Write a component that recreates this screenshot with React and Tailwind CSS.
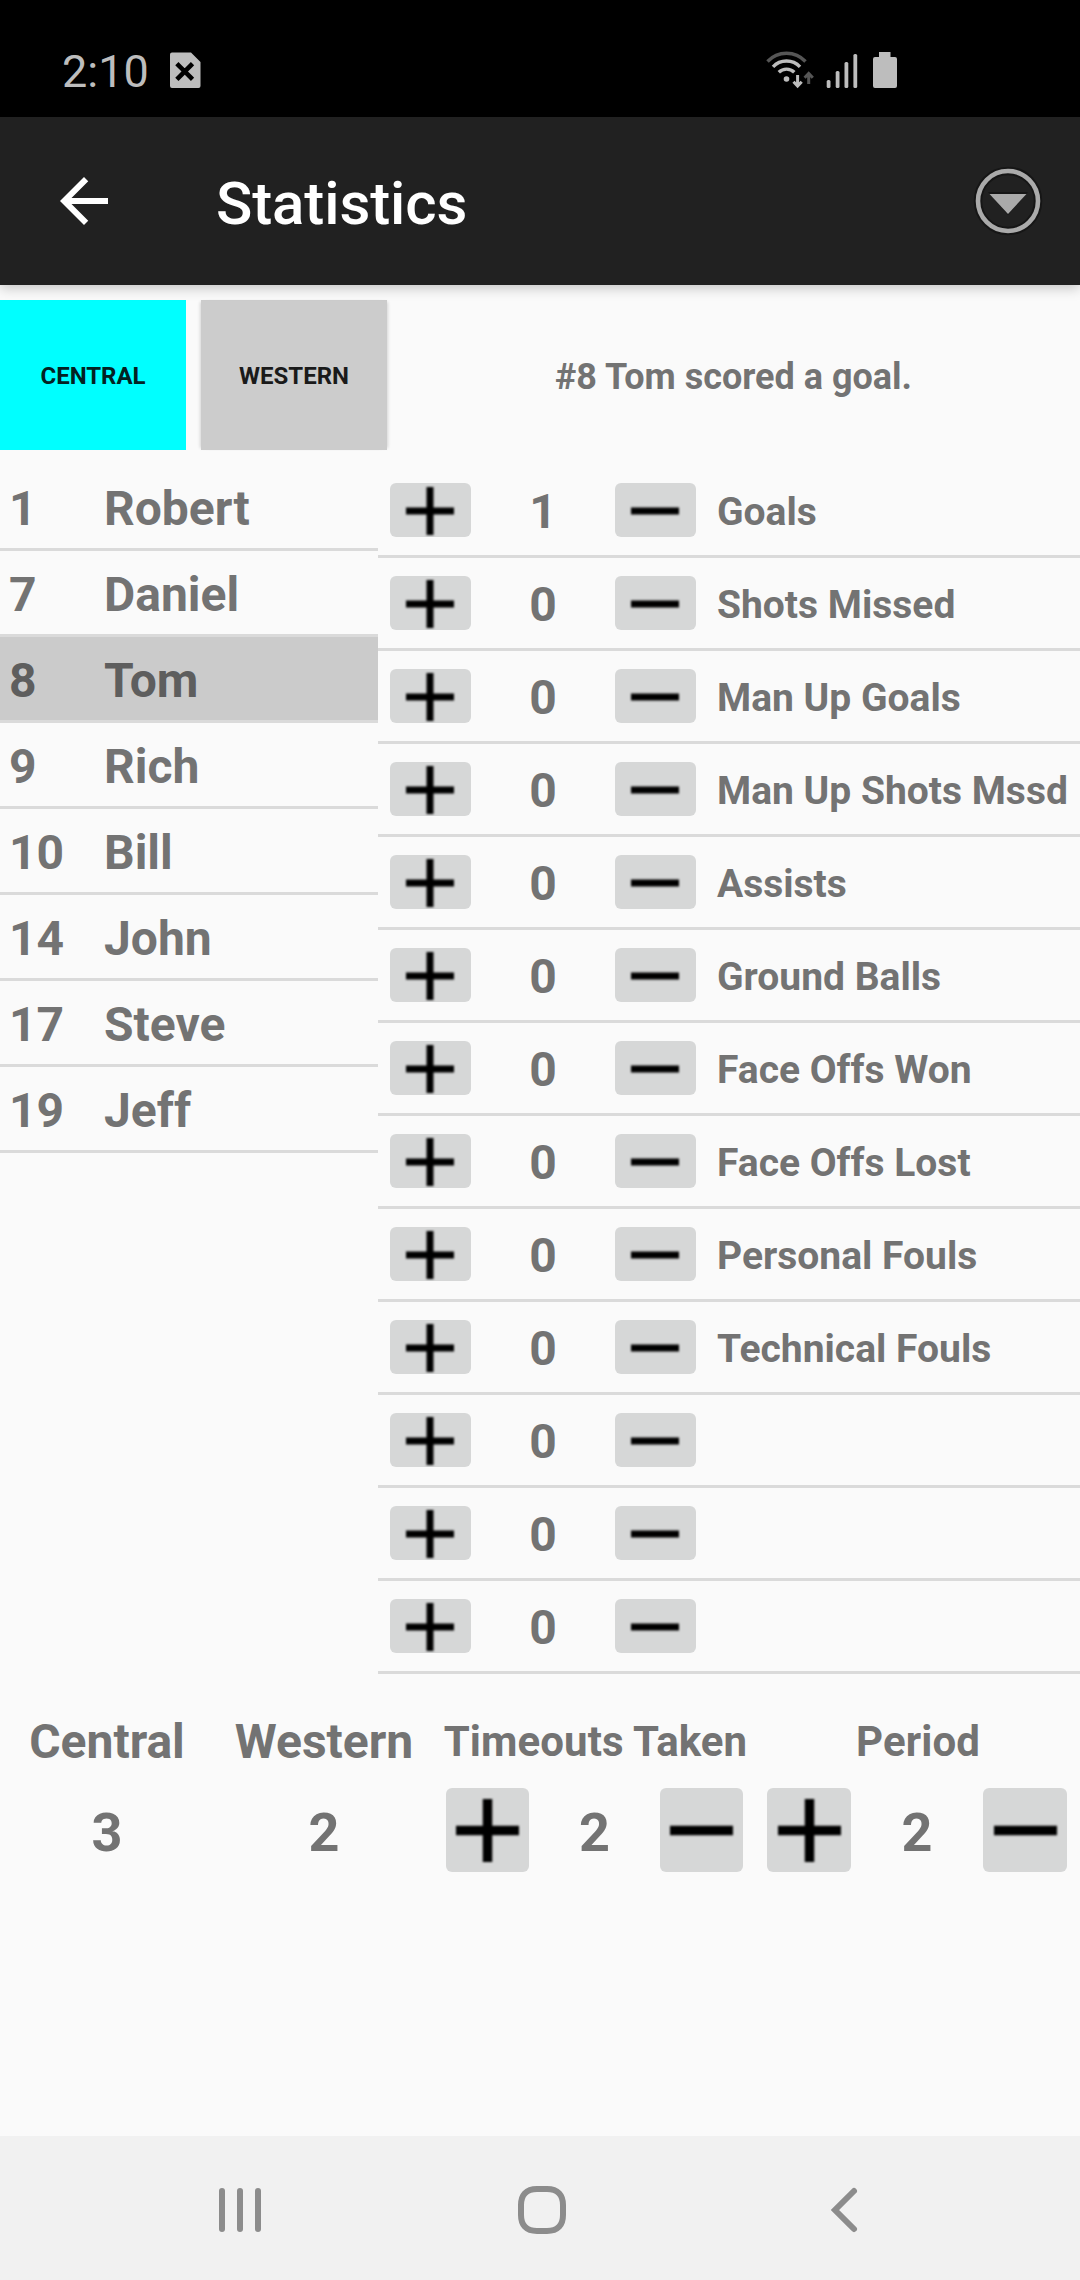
import React from "react";

const players = [
  ["1", "Robert"],
  ["7", "Daniel"],
  ["8", "Tom"],
  ["9", "Rich"],
  ["10", "Bill"],
  ["14", "John"],
  ["17", "Steve"],
  ["19", "Jeff"],
];

const stats = [
  ["1", "Goals"],
  ["0", "Shots Missed"],
  ["0", "Man Up Goals"],
  ["0", "Man Up Shots Mssd"],
  ["0", "Assists"],
  ["0", "Ground Balls"],
  ["0", "Face Offs Won"],
  ["0", "Face Offs Lost"],
  ["0", "Personal Fouls"],
  ["0", "Technical Fouls"],
  ["0", ""],
  ["0", ""],
  ["0", ""],
];

function StatusBar() {
  return (
    <div className="flex h-[117px] items-start bg-black pl-[62px]">
      <span className="mt-[45px] w-[108px] text-[45px] leading-[53px] text-[#bdbdbd]">2:10</span>
      <svg className="mt-[52px]" width="31" height="37" viewBox="0 0 31 37">
        <path d="M2 .5H21L30.5 10V34a2 2 0 0 1-2 2H2a2 2 0 0 1-2-2V2.500a2 2 0 0 1 2-2Z" fill="#bdbdbd" />
        <path d="M8.500 13.300l12.400 12.400M20.900 13.300l-12.400 12.400" stroke="#000" strokeWidth="4.600" strokeLinecap="square" />
      </svg>
      <svg className="ml-[565px] mt-[50px]" width="134" height="40" viewBox="0 0 134 40" fill="none">
        <g strokeWidth="3.400">
          <path d="M1.500 11.500a26 26 0 0 1 38 0" stroke="#565656" />
          <path d="M7 16.800a18.500 18.500 0 0 1 27 0" stroke="#bdbdbd" />
          <path d="M12.800 22.300a11 11 0 0 1 15.500 0" stroke="#bdbdbd" />
        </g>
        <circle cx="20.500" cy="29" r="2.800" fill="#bdbdbd" />
        <path d="M31.600 25v11M27.500 31.800l4.100 4.200 4.100-4.200" stroke="#bdbdbd" strokeWidth="3" />
        <path d="M42.700 34V23.500M38.600 27.700l4.100-4.200 4.100 4.200" stroke="#565656" strokeWidth="3" />
        <g fill="#bdbdbd">
          <rect x="60.700" y="30" width="3.800" height="8" rx="1.500" />
          <rect x="69.700" y="21" width="3.800" height="17" rx="1.500" />
          <rect x="78.500" y="12" width="3.800" height="26" rx="1.500" />
          <rect x="87.400" y="4" width="3.800" height="34" rx="1.500" />
          <path d="M113 2h11.500v5h4.500a2 2 0 0 1 2 2v27a2 2 0 0 1-2 2h-20a2 2 0 0 1-2-2V9a2 2 0 0 1 2-2h4Z" />
        </g>
      </svg>
    </div>
  );
}

function AppBar() {
  return (
    <div className="relative z-10 flex h-[168px] items-center bg-[#212121] pl-12 pr-9 shadow-[0_3px_12px_rgba(0,0,0,0.22)]">
      <svg width="72" height="72" viewBox="0 0 24 24" fill="#fff">
        <path d="M20 11H7.830l5.590-5.590L12 4l-8 8 8 8 1.410-1.410L7.830 13H20z" />
      </svg>
      <h1 className="ml-24 flex-1 pt-[5px] text-[60px] font-medium leading-[70px] tracking-[-0.1px] text-white">Statistics</h1>
      <svg width="72" height="72" viewBox="0 0 72 72">
        <circle cx="36" cy="36" r="30" fill="none" stroke="#161616" strokeWidth="8.500" />
        <path d="M16 27h40L36 50Z" fill="#161616" />
        <circle cx="36" cy="36" r="30" fill="none" stroke="#aaa" strokeWidth="4.600" />
        <path d="M17.500 29h37L36 49Z" fill="#aaa" />
      </svg>
    </div>
  );
}

function Sign({ size, thick, plus }) {
  const c = size / 2;
  const a = c - thick / 2;
  return (
    <svg className="blur-[1.2px]" width={size} height={size}>
      <rect x="1" y={a} width={size - 2} height={thick} />
      {plus && <rect x={a} y="1" width={thick} height={size - 2} />}
    </svg>
  );
}

function SmallButton({ plus }) {
  return (
    <button className="mx-3 mt-[18px] flex h-[54px] w-[81px] items-center justify-center rounded-[6px] bg-[#d6d7d7] pr-px pt-px">
      <Sign size={50} thick={7} plus={plus} />
    </button>
  );
}

function BigButton({ plus }) {
  return (
    <button className="mx-3 flex h-[84px] flex-[84] items-center justify-center rounded-[6px] bg-[#d6d7d7]">
      <Sign size={65} thick={9.5} plus={plus} />
    </button>
  );
}

function Counter({ title, value, className }) {
  return (
    <div className={"flex flex-col items-center " + className}>
      <div className="h-[74px] whitespace-nowrap pl-[2px] text-[42px] leading-[56px] tracking-[0.09px]">{title}</div>
      <div className="flex w-full items-center">
        <BigButton plus />
        <div className="flex-[108] pt-[5px] text-center text-[54px] leading-[64px]">{value}</div>
        <BigButton />
      </div>
    </div>
  );
}

function Score({ team, value, className }) {
  return (
    <div className={"flex flex-col items-center " + className}>
      <div className="h-[74px] text-[48px] leading-[56px]">{team}</div>
      <div className="flex h-[84px] items-center pt-[5px] text-[54px] leading-[64px]">{value}</div>
    </div>
  );
}

export default function App() {
  return (
    <div className="flex h-[2280px] w-[1080px] flex-col overflow-hidden bg-[#fafafa] font-['Roboto',sans-serif] text-[#737373]">
      <StatusBar />
      <AppBar />
      <div className="flex h-[180px] items-center font-bold">
        <button className="h-[150px] w-[186px] bg-[#00ffff] pt-[2px] text-[24px] text-[#032222]">CENTRAL</button>
        <button className="ml-[15px] h-[150px] w-[186px] bg-[#ccc] pt-[2px] text-[24px] text-[#1a1a1a] shadow-[-3px_0_3px_-2px_rgba(0,0,0,0.15),3px_0_3px_-2px_rgba(0,0,0,0.15)]">
          WESTERN
        </button>
        <div className="flex-1 pt-[4px] text-center text-[36px]">#8 Tom scored a goal.</div>
      </div>
      <div className="flex h-[1209px] font-bold">
        <div className="w-[378px]">
          {players.map(([number, name]) => (
            <div
              key={number}
              className={
                "flex h-[86px] items-center border-b-3 border-[#dadada] pl-[9px] pt-[4px] text-[48px] leading-[56px] " +
                (name === "Tom" ? "bg-[#cbcbcb] text-[#5e5e5e]" : "")
              }
            >
              <span className="w-[95px]">{number}</span>
              <span>{name}</span>
            </div>
          ))}
        </div>
        <div className="w-[702px]">
          {stats.map(([value, label], i) => (
            <div key={i} className="flex h-[93px] border-b-3 border-[#dadada]">
              <SmallButton plus />
              <span className="mt-[19px] w-[120px] text-center text-[48px] leading-[56px]">{value}</span>
              <SmallButton />
              <span className="ml-[9px] mt-[19px] whitespace-nowrap text-[39px] leading-[56px]">{label}</span>
            </div>
          ))}
        </div>
      </div>
      <div className="mt-[40px] flex font-bold">
        <Score team="Central" value="3" className="w-[214px]" />
        <Score team="Western" value="2" className="w-[220px]" />
        <Counter title="Timeouts Taken" value="2" className="w-[321px]" />
        <Counter title="Period" value="2" className="w-[324px]" />
      </div>
      <div className="mt-auto flex h-[144px] items-center justify-between bg-[#f1f1f1] pl-[216px] pr-[216px] pt-[4px]">
        <svg width="48" height="48" viewBox="0 0 48 48" fill="#8c8c8c">
          <rect x="3" y="2" width="6" height="44" rx="3" />
          <rect x="21" y="2" width="6" height="44" rx="3" />
          <rect x="39" y="2" width="6" height="44" rx="3" />
        </svg>
        <svg className="ml-1" width="48" height="48" viewBox="0 0 48 48" fill="none" stroke="#8c8c8c" strokeWidth="6">
          <path d="M24 3H29C40 3 45 9 45 19V29C45 39 40 45 29 45H19C8 45 3 39 3 29V19C3 9 8 3 19 3Z" />
        </svg>
        <svg width="48" height="48" viewBox="0 0 48 48" fill="none" stroke="#8c8c8c" strokeWidth="6" strokeLinecap="round">
          <path d="M38 5L19 24L38 43" />
        </svg>
      </div>
    </div>
  );
}
